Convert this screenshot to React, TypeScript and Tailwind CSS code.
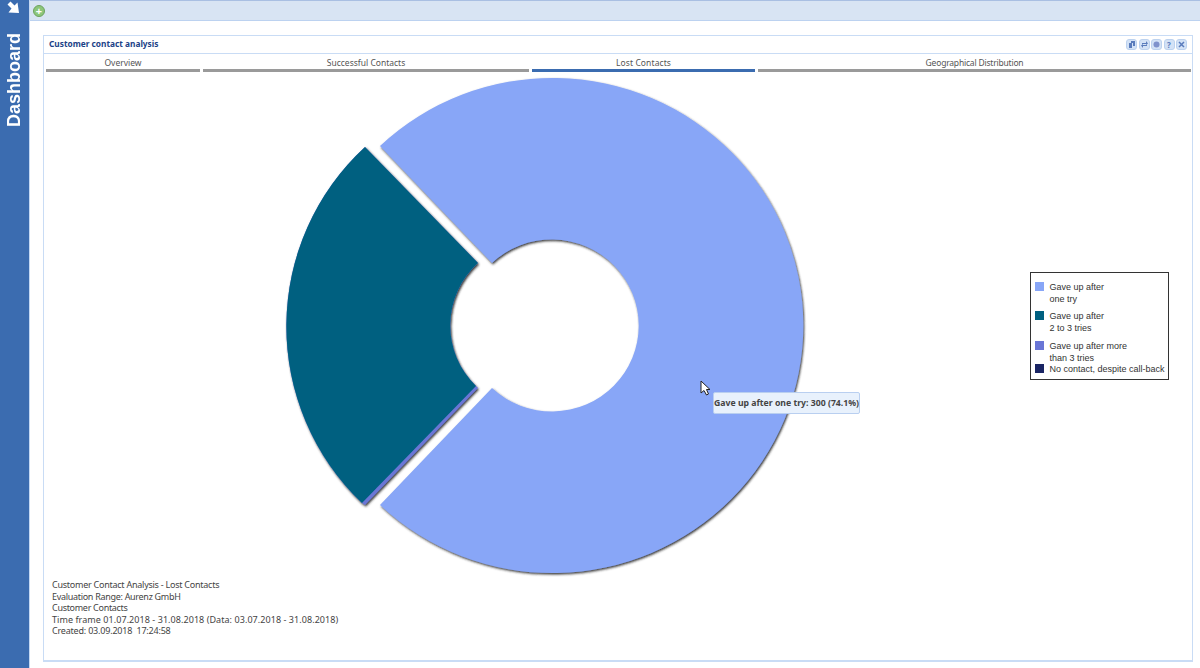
import React from "react";

const tabs = [
  { label: "Overview", w: "w-[154px]", tr: "" },
  { label: "Successful Contacts", w: "w-[326px]", tr: "" },
  { label: "Lost Contacts", w: "w-[223px]", tr: "tracking-[0.1px]", active: true },
  { label: "Geographical Distribution", w: "w-[433px]", tr: "tracking-[-0.2px]" },
];

const legend = [
  { c: "bg-[#88a6f7]", a: "Gave up after", b: "one try", h: "h-[29px]" },
  { c: "bg-[#006080]", a: "Gave up after", b: "2 to 3 tries", h: "h-[29.5px]" },
  { c: "bg-[#6a76d6]", a: "Gave up after more", b: "than 3 tries", h: "h-[23.5px]" },
  { c: "bg-[#1a2564]", a: "No contact, despite call-back", b: "", h: "h-[12px]" },
];

const footer = [
  { t: "Customer Contact Analysis - Lost Contacts", c: "tracking-[-0.25px]" },
  { t: "Evaluation Range: Aurenz GmbH", c: "tracking-[-0.3px]" },
  { t: "Customer Contacts", c: "tracking-[-0.3px]" },
  { t: "Time frame 01.07.2018 - 31.08.2018 (Data: 03.07.2018 - 31.08.2018)", c: "tracking-[0.06px]" },
  { t: "Created: 03.09.2018\u00a0 17:24:58", c: "tracking-[-0.2px]" },
];

function Tool({ children }: { children: React.ReactNode }) {
  return (
    <div className="w-[11px] h-[11px] rounded-[3px] bg-[#d3e2f6] border border-[#bcd2ef] flex items-center justify-center">
      {children}
    </div>
  );
}

function Chart() {
  return (
    <svg className="absolute left-0 top-0" width="1147" height="590" viewBox="44 72 1147 590">
      <defs>
        <filter id="sh" x="-10%" y="-10%" width="120%" height="120%">
          <feDropShadow dx="1" dy="1.5" stdDeviation="1.1" floodColor="#222" floodOpacity="0.9" />
        </filter>
      </defs>
      <g filter="url(#sh)">
        <path d="M380 146 A250.7 247.5 0 1 1 380 505 L492 388 A87 86 0 1 0 492 263 Z" fill="#88a6f7" />
      </g>
      <g filter="url(#sh)">
        <path d="M365 147 A244 244 0 0 0 362 503 L365 505 L478 388 L476 386 A84 84 0 0 1 478 263 Z" fill="#6a76d6" />
        <path d="M365 147 A244 244 0 0 0 362 503 L476 386 A84 84 0 0 1 478 263 Z" fill="#006080" />
      </g>
    </svg>
  );
}

export default function App() {
  return (
    <div className="flex w-[1200px] h-[668px] overflow-hidden bg-white font-['Noto_Sans',sans-serif]">
      <aside className="w-[29px] shrink-0 bg-[#3b6cb0] flex flex-col items-center">
        <svg width="13" height="13" viewBox="0 0 13 13" className="mt-[1px] mr-[3px] mb-[-1px]">
          <path d="M0.5 3.5 L3.5 0.5 L7.5 4.5 L10.5 1.5 L12 12 L1.5 11.5 L4.5 7.5 Z" fill="#fff" />
        </svg>
        <div className="mt-[20px] mr-[2px] [writing-mode:vertical-rl] rotate-180 text-white font-bold text-[18px] leading-none font-['Liberation_Sans',sans-serif]">
          Dashboard
        </div>
      </aside>
      <main className="flex-1 flex flex-col min-w-0 border-l border-[#c4d8f3]">
        <div className="h-[21px] shrink-0 border-t border-[#a9bfe2] border-b bg-[#d8e4f3] flex items-center pl-[3px] border-b-[#bcd2f0]">
          <div className="w-[12px] h-[12px] rounded-full bg-[#8cc67a] border border-[#6ea35f] flex items-center justify-center text-white text-[11px] leading-none font-bold">
            +
          </div>
        </div>
        <section className="ml-[13px] mr-[7px] mt-[14px] h-[627px] border-2 border-[#c9dcf5] border-l-[1px] border-t-[1px] border-r-[1px] flex flex-col">
          <header className="h-[18px] shrink-0 border-b border-[#c9dcf5] flex items-center justify-between pl-[5px] pr-[5px]">
            <span className="text-[8.3px] font-bold text-[#1c4287] leading-none">Customer contact analysis</span>
            <div className="flex gap-[1.5px]">
              <Tool><svg width="7" height="7" viewBox="0 0 7 7"><path d="M1 2h3v5H1zM3 0h4v5H5V2H3z" fill="#5a7cbc" /></svg></Tool>
              <Tool><svg width="7" height="7" viewBox="0 0 7 7"><path d="M1 2h4V0l2 2.5L5 4V3H1zM6 5H2v2L0 4.5 2 3v1h4z" fill="#5a7cbc" /></svg></Tool>
              <Tool><svg width="7" height="7" viewBox="0 0 7 7"><circle cx="3.5" cy="3.5" r="3" fill="#7f92cc" /></svg></Tool>
              <Tool><span className="text-[8px] leading-none font-bold text-[#5a7cbc]">?</span></Tool>
              <Tool><svg width="7" height="7" viewBox="0 0 7 7"><path d="M1 1l5 5M6 1L1 6" stroke="#5a7cbc" strokeWidth="1.5" /></svg></Tool>
            </div>
          </header>
          <nav className="flex gap-[3px] pl-[2px] h-[18px] shrink-0">
            {tabs.map((t) => (
              <div
                key={t.label}
                className={`${t.w} ${t.tr} h-[18px] flex items-center justify-center text-[8.5px] text-[#555] leading-none border-b-[3px] pt-[3px] ${
                  t.active ? "border-[#3b6cb0]" : "border-[#9a9a9a]"
                }`}
              >
                {t.label}
              </div>
            ))}
          </nav>
          <div className="relative flex-1 flex flex-col justify-end">
            <Chart />
            <div className="absolute left-[986px] top-[200px] w-[139px] h-[108px] border border-[#333] bg-white pl-[4px] pt-[8px] font-['Liberation_Sans',sans-serif] text-[9px] text-[#333] leading-[12px]">
              {legend.map((l) => (
                <div key={l.a} className={`flex gap-[5.5px] ${l.h}`}>
                  <div className={`w-[9px] h-[9px] mt-[1px] shrink-0 ${l.c}`} />
                  <div className="whitespace-nowrap">
                    {l.a}
                    {l.b && <br />}
                    {l.b}
                  </div>
                </div>
              ))}
            </div>
            <div className="absolute left-[669px] top-[320px] w-[147px] h-[22px] rounded-[2px] bg-[#e8f1fc] border border-[#b9cff0] flex items-center justify-center text-[8.7px] font-bold text-[#444] whitespace-nowrap leading-none">
              Gave up after one try: 300 (74.1%)
            </div>
            <svg className="absolute left-[656px] top-[308px]" width="11" height="16" viewBox="0 0 11 16">
              <path d="M1 1 L1 13 L4 10.5 L6.5 15 L8.5 14 L6.5 9.5 L10 9.5 Z" fill="#fff" stroke="#222" strokeWidth="1" />
            </svg>
            <div className="relative pl-[8px] pb-[23px] text-[9px] leading-[11.6px] text-[#444]">
              {footer.map((f) => (
                <div key={f.t} className={f.c}>{f.t}</div>
              ))}
            </div>
          </div>
        </section>
      </main>
    </div>
  );
}
